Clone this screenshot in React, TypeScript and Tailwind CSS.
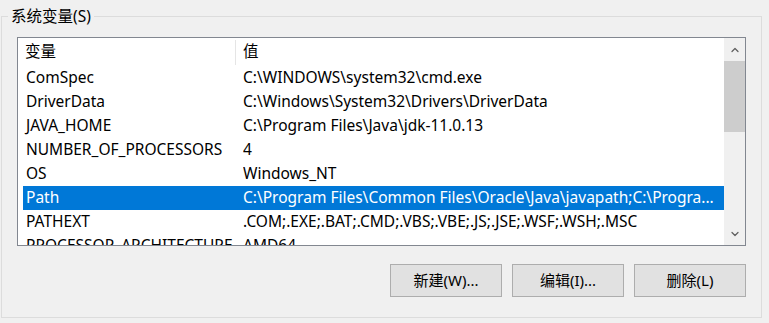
import { ChevronUp, ChevronDown } from 'lucide-react'

const rows = [
  { name: 'ComSpec', value: 'C:\\WINDOWS\\system32\\cmd.exe' },
  { name: 'DriverData', value: 'C:\\Windows\\System32\\Drivers\\DriverData' },
  { name: 'JAVA_HOME', value: 'C:\\Program Files\\Java\\jdk-11.0.13' },
  { name: 'NUMBER_OF_PROCESSORS', value: '4' },
  { name: 'OS', value: 'Windows_NT' },
  {
    name: 'Path',
    value: 'C:\\Program Files\\Common Files\\Oracle\\Java\\javapath;C:\\Progra...',
    selected: true,
  },
  { name: 'PATHEXT', value: '.COM;.EXE;.BAT;.CMD;.VBS;.VBE;.JS;.JSE;.WSF;.WSH;.MSC' },
  { name: 'PROCESSOR_ARCHITECTURE', value: 'AMD64' },
]

const font = { fontFamily: '"Noto Sans", "Noto Sans CJK SC", sans-serif' }

export default function App() {
  return (
    <div
      className="h-[323px] w-[769px] overflow-hidden bg-[#f0f0f0] pt-4 pl-px text-[15.5px] text-black"
      style={font}
    >
      <div className="relative flex h-[302px] w-[761px] flex-col border border-[#dcdcdc] pt-5 pl-[15px]">
        <span className="absolute -top-[11px] left-[6px] bg-[#f0f0f0] px-[3px] leading-5">
          系统变量(S)
        </span>

        <div className="flex h-[209px] w-[729px] border border-[#828790] bg-white">
          <div className="flex min-w-0 flex-1 flex-col overflow-hidden pl-[5px]">
            <div className="flex h-[28px] shrink-0 items-center">
              <div className="w-[212px] pl-[2px]">变量</div>
              <div className="h-[25px] w-px bg-[#e5e5e5]" />
              <div className="pl-[7px]">值</div>
            </div>
            {rows.map((r) => (
              <div
                key={r.name}
                className={
                  'flex h-6 shrink-0 items-center ' +
                  (r.selected ? 'bg-[#0078d7] text-white' : '')
                }
              >
                <div className="w-[220px] shrink-0 overflow-hidden whitespace-nowrap pl-[3px]">
                  {r.name}
                </div>
                <div className="min-w-0 flex-1 overflow-hidden whitespace-nowrap">{r.value}</div>
              </div>
            ))}
          </div>
          <div className="flex w-[21px] shrink-0 flex-col bg-[#f0f0f0]">
            <div className="flex h-[23px] items-center justify-center text-[#606060]">
              <ChevronUp size={12} strokeWidth={2.5} />
            </div>
            <div className="h-[71px] bg-[#cdcdcd]" />
            <div className="flex-1" />
            <div className="flex h-[23px] items-center justify-center text-[#606060]">
              <ChevronDown size={12} strokeWidth={2.5} />
            </div>
          </div>
        </div>

        <div className="mt-[18px] flex w-[729px] justify-end gap-[10px]">
          {['新建(W)...', '编辑(I)...', '删除(L)'].map((t) => (
            <button
              key={t}
              type="button"
              className="h-[33px] w-[112px] border border-[#adadad] bg-[#e1e1e1] text-[15px]"
            >
              {t}
            </button>
          ))}
        </div>
      </div>
    </div>
  )
}
